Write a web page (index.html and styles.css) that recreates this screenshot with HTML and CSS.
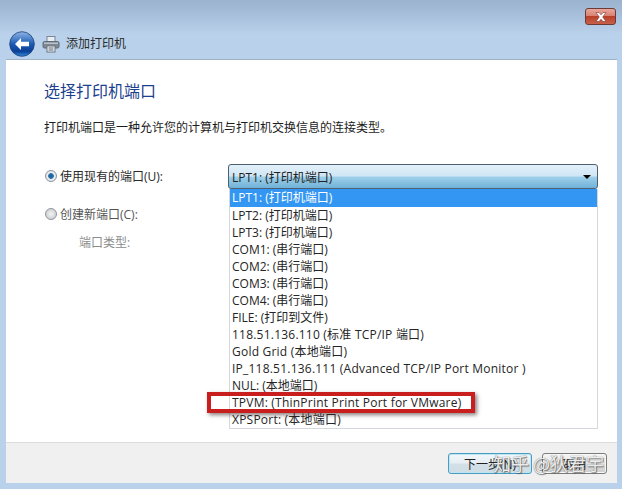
FILE: index.html
```html
<!DOCTYPE html>
<html lang="zh">
<head>
<meta charset="utf-8">
<title>添加打印机</title>
<link rel="stylesheet" href="styles.css">
</head>
<body>
<div class="window">
  <div class="titlebar">
    <div class="close"><svg width="14" height="10" viewBox="0 0 14 10"><path d="M2 0.5h3l2 2.3 2-2.3h3L8.7 5 12 9.5H9L7 7.2 5 9.5H2L5.3 5z" fill="#fff" stroke="#7d3a32" stroke-width=".6"/></svg></div>
  </div>
  <div class="navbar">
    <svg class="back" width="26" height="26" viewBox="0 0 26 26">
      <defs>
        <linearGradient id="bk" x1="0" y1="0" x2="0" y2="1"><stop offset="0" stop-color="#8fb4e6"/><stop offset=".5" stop-color="#1c5cb4"/><stop offset=".8" stop-color="#0b3f96"/><stop offset="1" stop-color="#2f8fe0"/></linearGradient>
      </defs>
      <circle cx="13" cy="13" r="12.3" fill="url(#bk)" stroke="#1d3f78" stroke-width=".8"/>
      <path d="M6 13l6-6v3.7h8v4.6h-8V19z" fill="#fff"/>
    </svg>
    <svg class="printer" width="18" height="18" viewBox="0 0 18 18">
      <rect x="5" y="1.5" width="8" height="6" fill="#e8edf2" stroke="#7b8794"/>
      <rect x="1" y="6.5" width="16" height="6.5" rx="1.5" fill="#7f8994" stroke="#5f6b78"/>
      <rect x="2" y="7.5" width="14" height="1.5" fill="#b8c0c8"/>
      <rect x="5" y="11" width="8" height="6" fill="#f6f8fa" stroke="#6b7582"/>
      <path d="M6.5 13h5M6.5 15h5" stroke="#56606c"/>
    </svg>
    <span class="navtitle">添加打印机</span>
  </div>
  <div class="panel">
    <div class="content">
      <h1 class="heading">选择打印机端口</h1>
      <p class="desc">打印机端口是一种允许您的计算机与打印机交换信息的连接类型。</p>
      <div class="option first">
        <div class="radio-label"><span class="radio on"></span><span>使用现有的端口(U):</span></div>
        <div class="combo-wrap">
          <div class="combo"><span>LPT1: (打印机端口)</span><i class="arrow"></i></div>
          <ul class="list">
            <li class="sel">LPT1: (打印机端口)</li>
            <li>LPT2: (打印机端口)</li>
            <li>LPT3: (打印机端口)</li>
            <li>COM1: (串行端口)</li>
            <li>COM2: (串行端口)</li>
            <li>COM3: (串行端口)</li>
            <li>COM4: (串行端口)</li>
            <li>FILE: (打印到文件)</li>
            <li class="latin">118.51.136.110 (标准 TCP/IP 端口)</li>
            <li class="latin">Gold Grid (本地端口)</li>
            <li class="latin">IP_118.51.136.111 (Advanced TCP/IP Port Monitor )</li>
            <li>NUL: (本地端口)</li>
            <li class="latin">TPVM: (ThinPrint Print Port for VMware)</li>
            <li class="latin">XPSPort: (本地端口)</li>
          </ul>
        </div>
      </div>
      <div class="option">
        <div class="radio-label"><span class="radio"></span><span>创建新端口(C):</span></div>
      </div>
      <div class="porttype">端口类型:</div>
    </div>
    <div class="footer">
      <button class="btn next">下一步(N)</button>
      <button class="btn cancel">取消</button>
    </div>
  </div>
  <div class="highlight"></div>
  <div class="watermark">知乎 @狄君宇</div>
</div>
</body>
</html>
```
FILE: styles.css
```css
* { box-sizing: border-box; }
html, body { margin: 0; padding: 0; }
body { width: 622px; height: 489px; overflow: hidden; font-family: "Open Sans", "Noto Sans CJK SC", sans-serif; font-size: 12px; color: #222; }
.window { position: relative; width: 622px; height: 489px; display: flex; flex-direction: column; background: linear-gradient(#9bb3cf 0, #a4bcd8 12px, #b9d1ea 34px); }
.titlebar { height: 30px; padding: 8px 6px 0 0; display: flex; justify-content: flex-end; align-items: flex-start; }
.close { width: 31px; height: 17px; border: 1px solid #6e3a36; border-radius: 3px; display: flex; align-items: center; justify-content: center; background: linear-gradient(#e9a79c 0, #d98273 45%, #b8402a 50%, #c9604a 100%); }
.navbar { height: 30px; padding-left: 9px; display: flex; align-items: center; }
.back { margin-top: -3px; }
.printer { margin: -3px 0 0 7px; }
.navtitle { margin: -3px 0 0 6px; line-height: 16px; color: #2b2b2b; }
.panel { flex: 1; margin: 0 5px 6px 6px; display: flex; flex-direction: column; background: #fff; box-shadow: 0 -1px 0 #9fb2c8; }
.content { flex: 1; padding: 21px 19px 0 38px; }
.heading { margin: 0; font-size: 16px; line-height: 20px; font-weight: 400; color: #1d3f8f; }
.desc { margin: 17px 0 0; line-height: 20px; color: #1c1c1c; }
.option { display: flex; align-items: flex-start; height: 26px; }
.option.first { margin-top: 26px; height: 38px; }
.radio-label { display: flex; align-items: center; width: 184px; height: 24px; color: #2a2a2a; }
.option:not(.first) .radio-label { color: #555; }
.radio { width: 12px; height: 12px; margin: 0 3px 0 1px; border-radius: 50%; border: 1px solid #8f959c; background: radial-gradient(circle, #f3f3f3 0, #d0d3d6 70%); flex: none; }
.radio.on { background: radial-gradient(circle, #1f5f96 0, #2c6fa8 35%, #e8eef4 45%, #d6dbe0 100%); }
.porttype { margin: 5px 0 0 35px; line-height: 20px; color: #8c8c8c; }
.combo-wrap { position: relative; width: 370px; }
.combo { height: 25px; padding: 0 4px 0 3px; border: 1px solid #4d5f70; border-radius: 3px; display: flex; align-items: center; justify-content: space-between; background: linear-gradient(#e3f0f9 0, #cfe6f5 48%, #9fd0ea 52%, #6fb1d8 100%); color: #222; }
.arrow { width: 0; height: 0; margin-right: 2px; border-left: 4px solid transparent; border-right: 4px solid transparent; border-top: 4px solid #000; }
.list { position: absolute; left: 1px; top: 25px; width: 369px; margin: 0; padding: 0; list-style: none; background: #fff; border: solid #d4d8dc; border-width: 0 1px 1px; }
.list li { height: 17px; line-height: 17px; padding-left: 2px; white-space: nowrap; color: #252525; }
.list li.latin { letter-spacing: .22px; }
.list li.sel { height: 18px; line-height: 18px; background: #3396f3; color: #fff; }
.footer { height: 41px; padding: 10px 10px 0 0; background: #f0f0f0; border-top: 1px solid #dcdcdc; display: flex; justify-content: flex-end; gap: 10px; align-items: flex-start; }
.btn { height: 21px; padding: 0; border-radius: 3px; font: inherit; color: #222; }
.next { width: 84px; border: 1px solid #4a9cc0; background: linear-gradient(#f2f7fa 0, #e6eef3 48%, #d3dfe6 52%, #cfdde5 100%); box-shadow: inset 0 0 0 1px #bfe6f5; }
.cancel { width: 65px; border: 1px solid #7c7c7c; background: linear-gradient(#f4f4f4 0, #ebebeb 48%, #dcdcdc 52%, #cfcfcf 100%); box-shadow: inset 0 0 0 1px #f7f7f7; }
.highlight { position: absolute; left: 207px; top: 392px; width: 268px; height: 21px; border: 4px solid #c81e1e; box-shadow: 2px 2px 4px rgba(60, 40, 40, .6); }
.watermark { position: absolute; left: 493px; top: 451px; font-size: 18px; line-height: 24px; color: rgba(255, 255, 255, .9); text-shadow: 0 0 1px #555, 1px 1px 1px rgba(60, 60, 60, .6); white-space: nowrap; font-family: "Noto Sans CJK SC", sans-serif; }
```
